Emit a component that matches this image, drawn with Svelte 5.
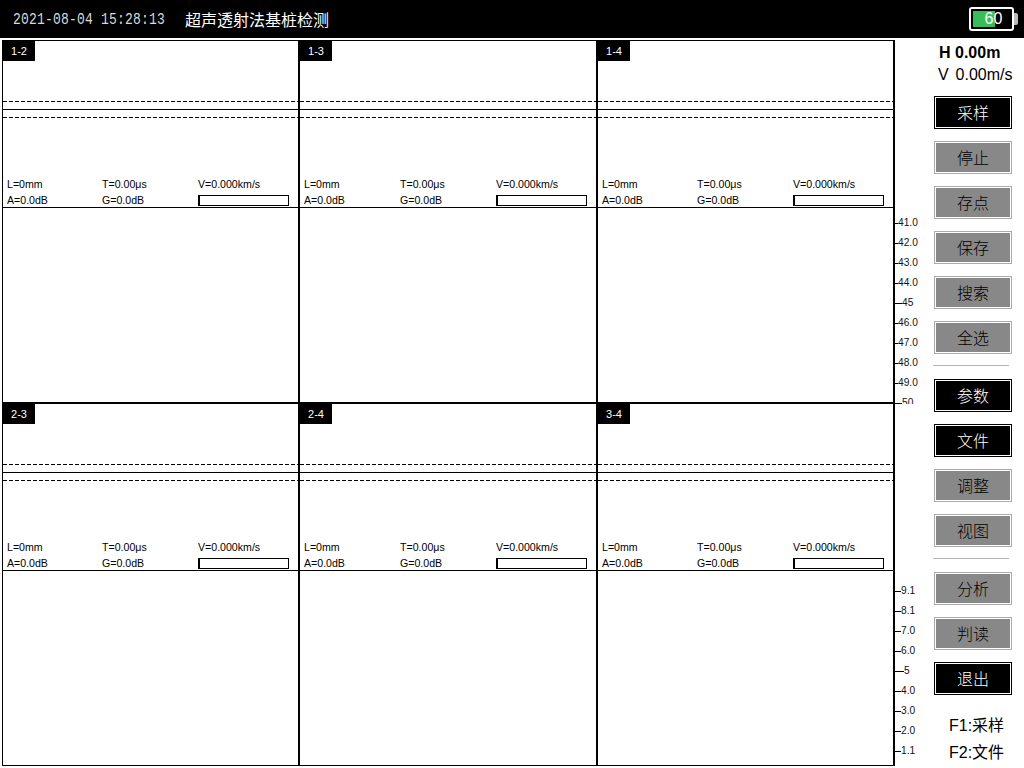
<script lang="ts">
	const cells = [
		["1-2", "1-3", "1-4"],
		["2-3", "2-4", "3-4"]
	];
	const upperTicks = ["41.0", "42.0", "43.0", "44.0", "45", "46.0", "47.0", "48.0", "49.0", "50"];
	const lowerTicks = ["9.1", "8.1", "7.0", "6.0", "5", "4.0", "3.0", "2.0", "1.1"];
	const groups = [
		[
			{ label: "采样", on: true },
			{ label: "停止" },
			{ label: "存点" },
			{ label: "保存" },
			{ label: "搜索" },
			{ label: "全选" }
		],
		[
			{ label: "参数", on: true },
			{ label: "文件", on: true },
			{ label: "调整" },
			{ label: "视图" }
		],
		[
			{ label: "分析" },
			{ label: "判读" },
			{ label: "退出", on: true }
		]
	];
	const batteryLevel = 60;
</script>

<div class="screen">
	<header class="topbar">
		<span class="clock">2021-08-04 15:28:13</span>
		<span class="title">超声透射法基桩检测</span>
		<div class="battery">
			<div class="cell-body" style="--level: {batteryLevel}%">{batteryLevel}</div>
			<div class="nub"></div>
		</div>
	</header>

	<div class="body">
		<main class="grid">
			{#each cells as row}
				{#each row as name}
					<section class="cell">
						<div class="wave">
							<div class="tag">{name}</div>
							<div class="dash first"></div>
							<div class="solid"></div>
							<div class="dash"></div>
							<div class="stats">
								<span>L=0mm</span>
								<span>T=0.00μs</span>
								<span>V=0.000km/s</span>
								<span>A=0.0dB</span>
								<span>G=0.0dB</span>
								<div class="gauge"></div>
							</div>
						</div>
						<div class="lower"></div>
					</section>
				{/each}
			{/each}
		</main>

		<div class="ruler">
			<div class="scale upper">
				{#each upperTicks as t}
					<div class="tick" class:major={!t.includes(".")}><i></i>{t}</div>
				{/each}
			</div>
			<div class="scale under">
				{#each lowerTicks as t}
					<div class="tick" class:major={!t.includes(".")}><i></i>{t}</div>
				{/each}
			</div>
		</div>

		<aside class="side">
			<div class="readout">
				<div class="h">H 0.00m</div>
				<div class="v">V&nbsp; 0.00m/s</div>
			</div>
			{#each groups as group, i}
				{#if i > 0}<hr />{/if}
				<div class="group">
					{#each group as b}
						<button class:on={b.on}>{b.label}</button>
					{/each}
				</div>
			{/each}
			<div class="keys">
				<div>F1:采样</div>
				<div>F2:文件</div>
			</div>
		</aside>
	</div>
</div>

<style>
	:global(body) {
		background: #fff;
		font-family: "Liberation Sans", "Noto Sans CJK SC", sans-serif;
	}

	.screen {
		width: 1024px;
		height: 768px;
		overflow: hidden;
		display: flex;
		flex-direction: column;
	}

	.topbar {
		height: 38px;
		background: #000;
		color: #fff;
		display: flex;
		align-items: center;
		padding-left: 13px;
		flex-shrink: 0;
	}

	.clock {
		width: 172px;
		font-family: "Liberation Mono", monospace;
		font-size: 13px;
		letter-spacing: 0.2px;
		color: #d8d8d8;
		white-space: pre;
		transform: scaleY(1.25);
		transform-origin: left center;
	}

	.title {
		font-family: "Noto Sans CJK SC", sans-serif;
		font-size: 16px;
	}

	.battery {
		margin-left: auto;
		margin-right: 6px;
		display: flex;
		align-items: center;
	}

	.cell-body {
		width: 45px;
		height: 24px;
		box-sizing: border-box;
		border: 2px solid #fff;
		border-radius: 3px;
		padding: 2px;
		background: linear-gradient(90deg, #38bd57 var(--level), #000 var(--level)) content-box;
		color: #fff;
		font-size: 16px;
		line-height: 16px;
		text-align: center;
		text-indent: 4px;
	}

	.nub {
		width: 4px;
		height: 12px;
		background: #bbb;
		border-radius: 0 2px 2px 0;
	}

	.body {
		display: flex;
		flex: 1;
		min-height: 0;
	}

	.grid {
		margin: 2px 0 0 2px;
		width: 893px;
		height: 726px;
		box-sizing: border-box;
		border-left: 1px solid #000;
		border-top: 1px solid #000;
		border-bottom: 1px solid #000;
		display: grid;
		grid-template-columns: 297px 298px 297px;
		grid-template-rows: 363px 362px;
		flex-shrink: 0;
		background: #fff;
	}

	.cell {
		display: flex;
		flex-direction: column;
		border-right: 2px solid #000;
		min-height: 0;
	}

	.cell:nth-child(-n + 3) {
		border-bottom: 2px solid #000;
	}

	.wave {
		height: 166px;
		flex-shrink: 0;
		border-bottom: 1px solid #000;
	}

	.tag {
		width: 32px;
		height: 20px;
		background: #000;
		color: #fff;
		font-size: 11px;
		line-height: 20px;
		text-align: center;
	}

	.dash {
		height: 1px;
		background: repeating-linear-gradient(90deg, #000 0 4px, transparent 4px 6px);
	}

	.dash.first {
		margin-top: 40px;
	}

	.solid {
		height: 1px;
		background: #000;
		margin: 7px 0;
	}

	.stats {
		margin-top: 58px;
		padding-left: 4px;
		display: grid;
		grid-template-columns: 95px 96px 91px;
		grid-auto-rows: 16px;
		align-items: center;
		font-size: 10.6px;
		color: #000;
	}

	.cell:nth-child(3n + 2) .stats {
		grid-template-columns: 96px 96px 91px;
	}

	.gauge {
		height: 11px;
		box-sizing: border-box;
		border: 1px solid #000;
		border-left-width: 2px;
		background: #fff;
	}

	.lower {
		flex: 1;
	}

	.ruler {
		width: 39px;
		flex-shrink: 0;
		padding-top: 170px;
		font-size: 10.2px;
		color: #111;
	}

	.scale {
		height: 196px;
		overflow: hidden;
		box-sizing: border-box;
	}

	.upper {
		padding-top: 5px;
		margin-bottom: 167px;
		--tick: 3px;
		--major: 7px;
	}

	.under {
		padding-top: 10px;
		--tick: 6px;
		--major: 9px;
	}

	.tick {
		height: 20px;
		display: flex;
		align-items: center;
		line-height: 20px;
	}

	.tick i {
		display: block;
		width: var(--tick);
		height: 1px;
		background: #000;
	}

	.tick.major i {
		width: var(--major);
	}

	.side {
		flex: 1;
		min-width: 0;
		padding-right: 12px;
		display: flex;
		flex-direction: column;
	}

	.readout {
		height: 58px;
		font-size: 16px;
		color: #000;
		padding-top: 5px;
		box-sizing: border-box;
		margin-left: 4px;
		white-space: nowrap;
	}

	.h {
		font-weight: bold;
		line-height: 19px;
		margin-left: 1px;
	}

	.v {
		line-height: 25px;
		word-spacing: -1px;
	}

	.group {
		display: flex;
		flex-direction: column;
		gap: 12px;
	}

	button {
		width: 78px;
		height: 33px;
		padding: 0 0 2px;
		box-sizing: border-box;
		border: 1px solid #aaa;
		outline: 1px solid #fff;
		outline-offset: -2px;
		background: #888;
		color: #000;
		font-family: "Noto Sans CJK SC", sans-serif;
		font-size: 16px;
		font-weight: 300;
		cursor: pointer;
	}

	button.on {
		background: #000;
		color: #fff;
		border-color: #000;
	}

	hr {
		border: none;
		border-top: 1px solid #b4b4b4;
		width: 76px;
		margin: 11px 0 13px -1px;
		height: 0;
	}

	.keys {
		margin-top: 17px;
		margin-left: 15px;
		font-size: 16px;
		line-height: 27px;
		color: #000;
		white-space: nowrap;
	}
</style>
